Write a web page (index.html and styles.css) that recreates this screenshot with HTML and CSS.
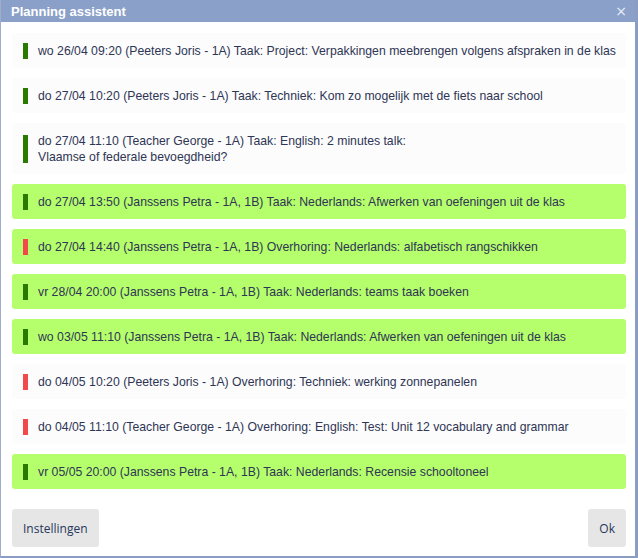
FILE: index.html
```html
<!DOCTYPE html>
<html>
<head>
<meta charset="utf-8">
<link rel="stylesheet" href="styles.css">
</head>
<body>
<div class="dialog">
  <div class="titlebar">
    <span class="title">Planning assistent</span>
    <span class="close">×</span>
  </div>
  <div class="content">
    <div class="list">
      <div class="item"><span class="mark ok"></span><span class="txt">wo 26/04 09:20 (Peeters Joris - 1A) Taak: Project: Verpakkingen meebrengen volgens afspraken in de klas</span></div>
      <div class="item"><span class="mark ok"></span><span class="txt">do 27/04 10:20 (Peeters Joris - 1A) Taak: Techniek: Kom zo mogelijk met de fiets naar school</span></div>
      <div class="item two"><span class="mark ok tall"></span><span class="txt">do 27/04 11:10 (Teacher George - 1A) Taak: English: 2 minutes talk:<br>Vlaamse of federale bevoegdheid?</span></div>
      <div class="item green"><span class="mark ok"></span><span class="txt">do 27/04 13:50 (Janssens Petra - 1A, 1B) Taak: Nederlands: Afwerken van oefeningen uit de klas</span></div>
      <div class="item green"><span class="mark bad"></span><span class="txt">do 27/04 14:40 (Janssens Petra - 1A, 1B) Overhoring: Nederlands: alfabetisch rangschikken</span></div>
      <div class="item green"><span class="mark ok"></span><span class="txt">vr 28/04 20:00 (Janssens Petra - 1A, 1B) Taak: Nederlands: teams taak boeken</span></div>
      <div class="item green"><span class="mark ok"></span><span class="txt">wo 03/05 11:10 (Janssens Petra - 1A, 1B) Taak: Nederlands: Afwerken van oefeningen uit de klas</span></div>
      <div class="item"><span class="mark bad"></span><span class="txt">do 04/05 10:20 (Peeters Joris - 1A) Overhoring: Techniek: werking zonnepanelen</span></div>
      <div class="item"><span class="mark bad"></span><span class="txt">do 04/05 11:10 (Teacher George - 1A) Overhoring: English: Test: Unit 12 vocabulary and grammar</span></div>
      <div class="item green"><span class="mark ok"></span><span class="txt">vr 05/05 20:00 (Janssens Petra - 1A, 1B) Taak: Nederlands: Recensie schooltoneel</span></div>
    </div>
    <div class="buttons">
      <button class="btn">Instellingen</button>
      <button class="btn">Ok</button>
    </div>
  </div>
</div>
</body>
</html>
```
FILE: styles.css
```css
html, body {
  margin: 0;
  padding: 0;
  background: #c9d3e3;
}
body {
  width: 638px;
  height: 558px;
  font-family: "Liberation Sans", Arial, sans-serif;
}
.dialog {
  box-sizing: border-box;
  width: 638px;
  height: 558px;
  background: #ffffff;
  border-left: 1px solid #9eadc9;
  border-right: 3px solid #8b9dc2;
  border-bottom: 2px solid #8b9dc2;
  display: flex;
  flex-direction: column;
}
.titlebar {
  height: 22px;
  background: #8aa0c8;
  display: flex;
  align-items: center;
  justify-content: space-between;
  padding: 0 8px 0 10px;
  flex: none;
}
.title {
  color: #ffffff;
  font-weight: bold;
  font-size: 13px;
}
.close {
  color: #e8eef8;
  font-family: "DejaVu Sans", sans-serif;
  font-size: 14px;
  line-height: 14px;
}
.content {
  flex: 1;
  display: flex;
  flex-direction: column;
  padding: 11px 9px 9px 11px;
}
.list {
  display: flex;
  flex-direction: column;
  gap: 10px;
}
.item {
  display: flex;
  align-items: center;
  background: #fcfcfc;
  border-radius: 3px;
  min-height: 35px;
  padding: 1px 10px 0 11px;
  box-sizing: border-box;
  font-size: 12.25px;
  line-height: 16px;
  color: #2f3555;
}
.item.two {
  height: 51px;
}
.item.green {
  background: #b5fe6c;
}
.mark {
  flex: none;
  width: 5px;
  height: 16px;
  margin-right: 10px;
  align-self: center;
}
.mark.tall {
  height: 28px;
}
.mark.ok {
  background: #2a7a00;
}
.mark.bad {
  background: #f24a4a;
}
.txt {
  white-space: nowrap;
}
.buttons {
  margin-top: auto;
  display: flex;
  justify-content: space-between;
}
.btn {
  height: 38px;
  border: none;
  border-radius: 3px;
  background: #e6e6e6;
  color: #27365a;
  font-family: "Open Sans", sans-serif;
  font-size: 12px;
  padding: 0 11px;
  cursor: pointer;
}
```
